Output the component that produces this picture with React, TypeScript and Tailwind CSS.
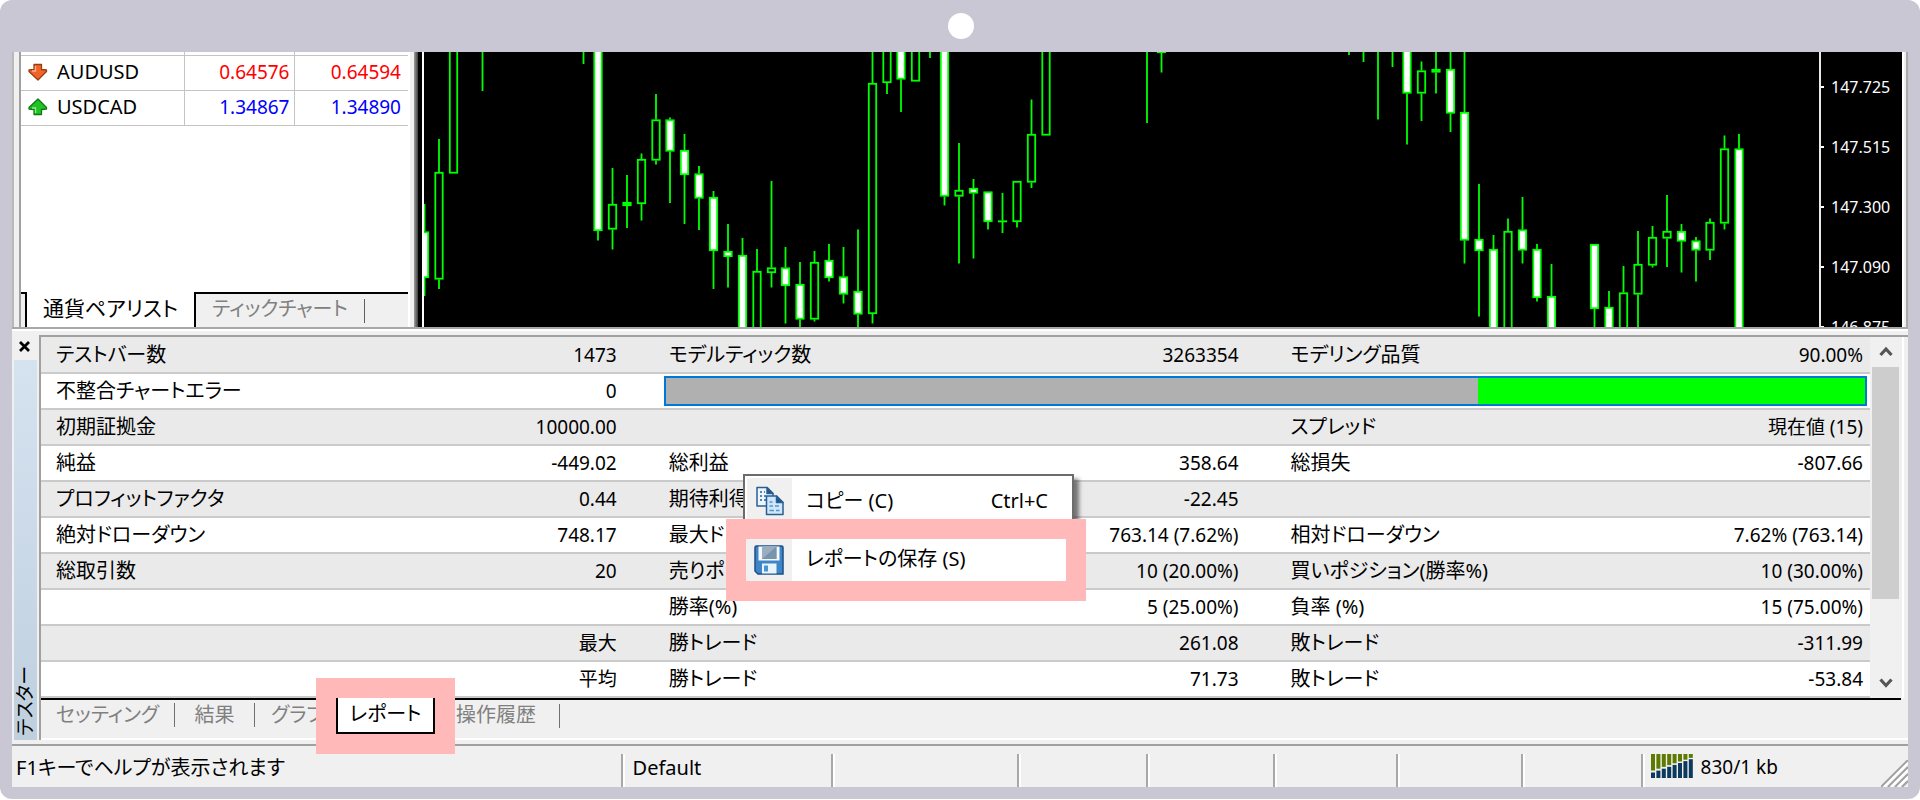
const TEXT = 'font-["Noto_Sans","Noto_Sans_CJK_JP",sans-serif]';

type Kind = "up" | "down" | "flat";
type Candle = [x: number, high: number, top: number, bottom: number, low: number, kind: Kind];

const candles: Candle[] = [
  [424.5, 204, 231.5, 278, 296, "down"],
  [439, 139, 172, 279.5, 289, "up"],
  [453.5, 40, 40, 173.5, 173.5, "up"],
  [482.5, 40, 40, 40, 91, "flat"],
  [583.5, 40, 40, 40, 64, "flat"],
  [598, 40, 40, 231, 240.5, "down"],
  [612.5, 168, 204, 229.5, 249.5, "up"],
  [627, 175, 202, 206, 228, "flat"],
  [641.5, 153.5, 159, 204, 220.5, "up"],
  [656, 94, 119.5, 160.5, 164.5, "up"],
  [670, 117.5, 119.5, 151.5, 203, "down"],
  [684.5, 134, 150, 175, 224, "down"],
  [699, 166, 173.5, 198.5, 230, "down"],
  [713.5, 191, 197, 251, 289, "down"],
  [728, 224, 251, 257, 287.5, "down"],
  [742.5, 238, 255, 340, 340, "down"],
  [757, 249, 271, 340, 340, "up"],
  [771.5, 181, 267.5, 273, 287.5, "up"],
  [785.5, 247, 267.5, 286, 323.5, "down"],
  [800, 262, 284, 319.5, 340, "down"],
  [814.5, 251, 262, 319.5, 321.5, "up"],
  [829, 244, 260, 278, 281.5, "down"],
  [843.5, 247, 276.5, 294.5, 303.5, "down"],
  [858, 229.5, 291, 314.5, 340, "down"],
  [872.5, 40, 83, 314, 323.5, "up"],
  [887, 40, 40, 83, 94, "up"],
  [901, 40, 40, 79.5, 112, "down"],
  [915.5, 40, 40, 81.5, 81.5, "up"],
  [930, 40, 40, 40, 58, "flat"],
  [944.5, 40, 40, 196.5, 205.5, "down"],
  [959, 143, 190, 196.5, 263.5, "up"],
  [973.5, 179, 188, 193.5, 258.5, "down"],
  [988, 191.5, 191.5, 222, 229.5, "down"],
  [1002.5, 193, 220.5, 222, 233, "flat"],
  [1017, 181, 181, 222, 227.5, "up"],
  [1031.5, 99.5, 134, 182.5, 188, "up"],
  [1046, 40, 40, 135.5, 135.5, "up"],
  [1147, 40, 40, 40, 123, "flat"],
  [1161.5, 40, 51, 53, 72.5, "flat"],
  [1349, 40, 40, 40, 55, "flat"],
  [1363.5, 40, 40, 40, 62, "flat"],
  [1378, 40, 40, 40, 119.5, "flat"],
  [1392.5, 40, 40, 40, 67, "flat"],
  [1407, 40, 40, 93.5, 144.5, "down"],
  [1421.5, 61.5, 70.5, 93.5, 121, "up"],
  [1436, 40, 69, 72.5, 93.5, "flat"],
  [1450.5, 40, 69, 113.5, 132, "down"],
  [1464.5, 40, 112, 240.5, 263.5, "down"],
  [1479, 184, 239, 251, 316.5, "down"],
  [1493.5, 235, 249, 340, 340, "down"],
  [1508, 218.5, 231, 340, 340, "up"],
  [1522.5, 197, 229.5, 250.5, 263.5, "down"],
  [1537, 244, 249, 298, 301.5, "down"],
  [1551.5, 264, 296, 340, 340, "down"],
  [1594.5, 244, 244, 309, 340, "down"],
  [1609, 291, 307, 340, 340, "down"],
  [1623.5, 266, 292.5, 340, 340, "up"],
  [1638, 231, 264, 294.5, 340, "up"],
  [1652.5, 226, 237, 265.5, 267.5, "up"],
  [1667, 195, 231, 238.5, 267, "up"],
  [1681.5, 224, 231, 241.5, 272.5, "down"],
  [1696, 237, 240.5, 250.5, 281.5, "down"],
  [1710, 218.5, 222, 250.5, 260, "up"],
  [1724.5, 135.5, 148.5, 223.5, 229.5, "up"],
  [1739, 134, 148.5, 340, 340, "down"],
];

const prices = ["147.725", "147.515", "147.300", "147.090", "146.875"];

const rows: string[][] = [
  ["テストバー数", "1473", "モデルティック数", "3263354", "モデリング品質", "90.00%"],
  ["不整合チャートエラー", "0"],
  ["初期証拠金", "10000.00", "", "", "スプレッド", "現在値 (15)"],
  ["純益", "-449.02", "総利益", "358.64", "総損失", "-807.66"],
  ["プロフィットファクタ", "0.44", "期待利得", "-22.45", "", ""],
  ["絶対ドローダウン", "748.17", "最大ドローダウン", "763.14 (7.62%)", "相対ドローダウン", "7.62% (763.14)"],
  ["総取引数", "20", "売りポジション(勝率%)", "10 (20.00%)", "買いポジション(勝率%)", "10 (30.00%)"],
  ["", "", "勝率(%)", "5 (25.00%)", "負率 (%)", "15 (75.00%)"],
  ["", "最大", "勝トレード", "261.08", "敗トレード", "-311.99"],
  ["", "平均", "勝トレード", "71.73", "敗トレード", "-53.84"],
];

function Arrow({ up }: { up?: boolean }) {
  return (
    <svg viewBox="0 0 20 18" className="h-[18px] w-5 shrink-0" aria-hidden="true">
      <g transform={up ? "translate(0 18) scale(1 -1)" : undefined}>
        <path
          d="M6 1.5h7.500v5l5 .5v1.500L10 17 1 8.500V7l5-.5z"
          fill={up ? "#22c322" : "#f0642a"}
          stroke={up ? "#0c7a14" : "#9c3a12"}
          strokeWidth="1.300"
          strokeLinejoin="round"
        />
        <path d="M7.500 3v5H4" fill="none" stroke={up ? "#8df08d" : "#ffb088"} strokeWidth="1.300" />
      </g>
    </svg>
  );
}

function MarketWatch() {
  const quotes = [
    { name: "AUDUSD", bid: "0.64576", ask: "0.64594", up: false },
    { name: "USDCAD", bid: "1.34867", ask: "1.34890", up: true },
  ];
  return (
    <section className="flex w-[387px] shrink-0 flex-col justify-between bg-white">
      <table className="w-full table-fixed border-collapse">
        <colgroup>
          <col className="w-[163px]" />
          <col className="w-[110px]" />
          <col />
        </colgroup>
        <tbody>
          <tr className="h-[3px] border-b border-[#c4c4c4]">
            <td className="border-r border-[#c4c4c4] p-0" />
            <td className="border-r border-[#c4c4c4] p-0" />
            <td className="p-0" />
          </tr>
          {quotes.map((q) => (
            <tr key={q.name} className="h-[35px] border-b border-[#c4c4c4]">
              <th scope="row" className="border-r border-[#c4c4c4] p-0 pb-[2px] pl-[7px] text-left text-[20px] leading-[28px] font-normal">
                <span className="flex items-center gap-[9px]">
                  <Arrow up={q.up} />
                  {q.name}
                </span>
              </th>
              <td className={`border-r border-[#c4c4c4] p-0 pr-1 pb-[2px] text-right text-[19px] leading-[28px] ${q.up ? "text-[#0000ff]" : "text-[#ff0000]"}`}>{q.bid}</td>
              <td className={`p-0 pr-[7px] pb-[2px] text-right text-[19px] leading-[28px] ${q.up ? "text-[#0000ff]" : "text-[#ff0000]"}`}>{q.ask}</td>
            </tr>
          ))}
        </tbody>
      </table>
      <div className="flex h-[35px] text-[20px] leading-[28px]">
        <div className="w-[6px] border-t-2 border-r-2 border-black bg-[#f0f0f0]" />
        <button type="button" className="w-[167px] pb-1 text-[21px] text-black">通貨ペアリスト</button>
        <div className="flex flex-1 items-center border-t-2 border-l-2 border-black bg-[#f0f0f0]">
          <button type="button" className="w-[168px] pb-1 text-[#808080]">ティックチャート</button>
          <span className="h-6 w-px bg-[#606060]" />
        </div>
      </div>
    </section>
  );
}

function Chart() {
  return (
    <section className="flex min-w-0 flex-1 bg-black">
      <svg viewBox="424 52 1395 275" preserveAspectRatio="xMaxYMin slice" className="h-[275px] min-w-0 flex-1" role="img" aria-label="ローソク足チャート">
        {candles.map(([x, high, top, bottom, low, kind]) => (
          <g key={x} stroke="#00ff00" strokeWidth="1.8">
            <path d={`M${x} ${high}V${top}M${x} ${bottom}V${low}`} />
            <rect
              x={x - 3.7}
              y={top + 0.8}
              width="7.4"
              height={Math.max(bottom - top - 1.6, 0.1)}
              fill={kind === "down" ? "#ffffff" : kind === "up" ? "#000000" : "#00ff00"}
            />
          </g>
        ))}
      </svg>
      <div className="flex w-[83px] shrink-0 flex-col overflow-hidden border-l-2 border-[#e8e8e8] pt-[5px] text-[16px] text-white">
        {prices.map((p) => (
          <div key={p} className="flex h-[60px] shrink-0 items-center gap-[7px]">
            <span className="h-[2px] w-[3px] bg-white" />
            {p}
          </div>
        ))}
      </div>
    </section>
  );
}

function CopyIcon() {
  return (
    <svg viewBox="0 0 30 30" className="h-[30px] w-[30px]" aria-hidden="true">
      <g stroke="#2a5f92" strokeWidth="1.5" strokeLinejoin="round">
        <path d="M2 1.5h10l6 6V20H2z" fill="#eaf5fd" />
        <path d="M12 1.5V7.500h6z" fill="#1f5586" />
        <path d="M5 6h2m2 0h1M5 10h2m2 0h2M5 14h2m2 0h2" fill="none" />
        <path d="M11.500 10h10l6.500 6.500v12H11.500z" fill="#cfe7fa" />
        <path d="M21.500 10v6.500h6.500z" fill="#1f5586" />
        <path d="M14.500 16h3M14.500 20h3.500m2 0h4M14.500 24.500h4.500m2 0h3.500" fill="none" stroke="#5d92c4" />
      </g>
    </svg>
  );
}

function SaveIcon() {
  return (
    <svg viewBox="0 0 30 30" className="h-[30px] w-[30px]" aria-hidden="true">
      <path d="M1 2.500Q1 1 2.500 1H27.500Q29 1 29 2.500V29H4L1 26z" fill="#3f86c8" stroke="#1d4f86" strokeWidth="1.500" />
      <path d="M4.500 1.500H25.500V15.500H4.500z" fill="#f4f8fc" />
      <path d="M8 1.500H22.500V14H8z" fill="#9aaec0" />
      <path d="M8 14L22.500 1.500V14z" fill="#7893ac" />
      <path d="M8 18.500H22.500V28.500H8z" fill="#e9f3fb" />
      <path d="M10 20.500h4v6h-4z" fill="#4b92d0" />
    </svg>
  );
}

function ContextMenu() {
  return (
    <div role="menu">
      <div className="absolute top-[139px] left-[731px] flex h-[60px] w-[331px] border-2 border-[#6c6c6c] bg-white p-[2px] text-[20px] shadow-[5px_5px_4px_rgba(0,0,0,0.5)]">
        <button type="button" role="menuitem" className="flex h-[46px] w-full items-center">
          <span className="flex h-full w-[45px] items-center justify-center bg-[#f0f0f0]"><CopyIcon /></span>
          <span className="flex-1 pl-[14px] text-left">コピー (C)</span>
          <span className="pr-[22px]">Ctrl+C</span>
        </button>
      </div>
      <div className="absolute top-[184px] left-[714px] w-[360px] border-[20px] border-[#ffb9b9] bg-white text-[20px]">
        <button type="button" role="menuitem" className="flex h-[42px] w-full items-center">
          <span className="flex h-full w-[46px] items-center justify-center bg-[#f0f0f0]"><SaveIcon /></span>
          <span className="flex-1 pb-[2px] pl-[14px] text-left">レポートの保存 (S)</span>
        </button>
      </div>
    </div>
  );
}

function Report() {
  return (
    <table className="min-w-0 flex-1 table-fixed border-collapse text-black">
      <colgroup>
        <col className="w-[16.5%]" />
        <col className="w-[17%]" />
        <col className="w-[17%]" />
        <col className="w-[17%]" />
        <col className="w-[16.5%]" />
        <col className="w-[16%]" />
      </colgroup>
      <tbody>
        {rows.map((cells, i) => (
          <tr key={i} className="h-[36px] border-b-2 border-[#cacaca] odd:bg-[#eaeaea] even:bg-white">
            {cells.map((c, j) =>
              j % 2 === 0 ? (
                <td key={j} className="p-0 pl-[15px] text-[20px] leading-[30px] whitespace-nowrap">{c}</td>
              ) : (
                <td key={j} className={`p-0 text-right text-[19px] leading-[30px] whitespace-nowrap ${j === 5 ? "pr-[7px]" : "pr-[37px]"}`}>{c}</td>
              ),
            )}
            {cells.length === 2 && (
              <td colSpan={4} className="p-0 pr-[3px] pl-[10px]">
                <div className="flex h-[30px] border-2 border-[#0078d7] bg-[#b0b0b0]">
                  <div className="ml-auto w-[32.3%] bg-[#00ff00]" />
                </div>
              </td>
            )}
          </tr>
        ))}
      </tbody>
    </table>
  );
}

function Chevron({ down }: { down?: boolean }) {
  return (
    <svg viewBox="0 0 14 12" className="h-3 w-[14px]" aria-hidden="true">
      <path d={down ? "M1.500 2.500L7 8.500L12.500 2.500" : "M1.500 9L7 3L12.500 9"} fill="none" stroke="#555555" strokeWidth="3.200" />
    </svg>
  );
}

function Tester() {
  return (
    <section className="relative flex border-b border-[#f0f0f0]">
      <div className="flex w-[27px] shrink-0 flex-col">
        <button type="button" aria-label="閉じる" className="flex h-[25px] items-center pb-[3px] pl-[7px]">
          <svg viewBox="0 0 11 11" className="h-[11px] w-[11px]" aria-hidden="true">
            <path d="M1 1L10 10M10 1L1 10" stroke="#000000" strokeWidth="2.800" />
          </svg>
        </button>
        <div className="ml-[2px] flex w-[23px] flex-1 items-end justify-center bg-gradient-to-b from-[#d5e3f1] to-[#c0cfde] pb-1">
          <span className="rotate-180 text-[19px] leading-[23px] [writing-mode:vertical-rl]">
            <span className="[text-orientation:sideways]">テスター</span>
          </span>
        </div>
      </div>
      <div className="min-w-0 flex-1 border-t-2 border-l-2 border-[#a0a0a0]">
        <div className="flex">
          <Report />
          <div className="mr-[3px] ml-[2px] flex w-[27px] flex-col">
            <button type="button" aria-label="上へ" className="flex h-[30px] items-center justify-center"><Chevron /></button>
            <div className="h-[232px] bg-[#cdcdcd]" />
            <div className="flex-1" />
            <button type="button" aria-label="下へ" className="flex h-[30px] items-center justify-center"><Chevron down /></button>
          </div>
          <div className="w-[6px] border-l-2 border-white" />
        </div>
        <div className="mr-[7px] border-t-2 border-black" />
        <nav className="relative flex h-[40px] items-start border-b-2 border-white text-[20px] leading-[30px] text-[#808080]">
          <Tab width="w-[134px]" label="セッティング" />
          <Tab width="w-[80px]" label="結果" />
          <button type="button" className="w-[81px] pl-4 text-left">グラフ</button>
          <button type="button" className="ml-[99px] w-[124px] pl-[21px] text-left">操作履歴</button>
          <span className="mt-1 h-6 w-px bg-[#707070]" />
          <div className="absolute -top-[22px] left-[275px] border-[20px] border-[#ffb9b9] bg-white">
            <button type="button" aria-current="page" className="flex h-[36px] w-[99px] items-center justify-center border-x-2 border-b-2 border-black pb-[2px] text-black">レポート</button>
          </div>
        </nav>
      </div>
      <ContextMenu />
    </section>
  );
}

function Tab({ width, label }: { width: "w-[134px]" | "w-[80px]"; label: string }) {
  return (
    <div className={`flex ${width} items-center justify-between`}>
      <button type="button" className="flex-1">{label}</button>
      <span className="h-6 w-px bg-[#707070]" />
    </div>
  );
}

function Signal() {
  return (
    <svg viewBox="0 0 42 24" className="h-6 w-[42px]" aria-hidden="true">
      {[0, 1, 2, 3, 4, 5, 6, 7].map((i) => (
        <g key={i}>
          <rect x={i * 5.4} y="0" width="4" height={16.5 - i * 1.8} fill="#5f7a00" />
          <rect x={i * 5.4} y={18.5 - i * 1.9} width="4" height={5.5 + i * 1.9} fill="#0b3a5c" />
        </g>
      ))}
    </svg>
  );
}

function StatusBar() {
  const divider = "border-l-2 border-[#a8a8a8] shadow-[inset_2px_0_0_#ffffff]";
  return (
    <footer className="mt-[3px] flex h-[43px] items-stretch border-t-2 border-[#a0a0a0] bg-[#f0f0f0] pt-2 text-[20px] leading-[27px]">
      <div className="w-[32.1%] pl-1">F1キーでヘルプが表示されます</div>
      <div className={`w-[11.1%] pl-[10px] ${divider}`}>Default</div>
      <div className={`w-[9.8%] ${divider}`} />
      <div className={`w-[6.8%] ${divider}`} />
      <div className={`w-[6.7%] ${divider}`} />
      <div className={`w-[6.5%] ${divider}`} />
      <div className={`w-[6.6%] ${divider}`} />
      <div className={`w-[6.3%] ${divider}`} />
      <div className={`flex flex-1 items-start gap-2 pl-2 ${divider}`}>
        <Signal />
        <span className="text-[19px]">830/1 kb</span>
        <svg viewBox="0 0 27 27" className="ml-auto h-[27px] w-[27px] self-end" aria-hidden="true">
          <path d="M0 27L27 0M7 27L27 7M14 27L27 14M21 27L27 21" stroke="#a0a0a0" strokeWidth="2" />
          <path d="M3 27L27 3M10 27L27 10M17 27L27 17" stroke="#ffffff" strokeWidth="2" />
        </svg>
      </div>
    </footer>
  );
}

export default function App() {
  return (
    <div className="bg-white">
      <main className={`rounded-xl bg-[#c8c7d3] px-3 pb-3 text-black [font-feature-settings:"palt"] ${TEXT}`}>
        <div className="flex h-[52px] items-center justify-center pl-[2px]">
          <span className="h-[26px] w-[26px] rounded-full bg-white" />
        </div>
        <div className="bg-[#f0f0f0]">
          <div className="flex h-[275px]">
            <div className="w-[9px] shrink-0 border-r-2 border-l-2 border-r-[#a0a0a0] border-l-[#b8b8b8]" />
            <MarketWatch />
            <div className="flex w-4 shrink-0">
              <span className="w-[2px] bg-white" />
              <span className="w-1 bg-[#f0f0f0]" />
              <span className="w-1 bg-gradient-to-r from-[#a0a0a0] to-[#404040]" />
              <span className="w-1 bg-black" />
              <span className="w-[2px] bg-white" />
            </div>
            <Chart />
            <div className="w-[6px] shrink-0 border-r-2 border-l-2 border-r-[#a8a8a8] border-l-white" />
          </div>
          <div className="mb-[4px] h-1 border-t-2 border-b-2 border-t-[#a8a8a8] border-b-white" />
          <Tester />
          <StatusBar />
        </div>
      </main>
    </div>
  );
}
